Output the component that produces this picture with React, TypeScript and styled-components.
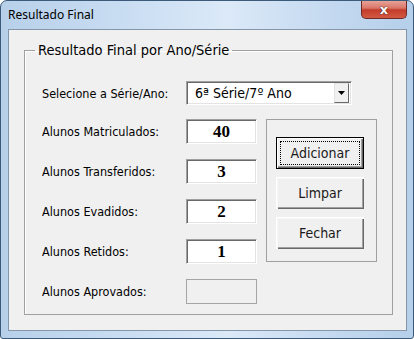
import styled, { createGlobalStyle } from "styled-components";

const GlobalStyle = createGlobalStyle`
  html, body { margin: 0; padding: 0; background: #ffffff; }
  body { font-family: "DejaVu Sans Condensed", "DejaVu Sans", sans-serif; }
`;

const Window = styled.div`
  width: 414px;
  height: 339px;
  display: flex;
  flex-direction: column;
  box-sizing: border-box;
  border: 1px solid #3c5a7a;
  border-radius: 7px 7px 3px 3px;
  background: linear-gradient(90deg, #b7d0ea 0%, #c9ddf2 30%, #dbe9f8 55%, #c4d9f0 80%, #b5cfea 100%);
  overflow: hidden;
`;

const TitleBar = styled.div`
  height: 28px;
  display: flex;
  justify-content: space-between;
  align-items: flex-start;
  padding-left: 7px;
  padding-right: 6px;
`;

const Title = styled.span`
  font-family: "Noto Sans", "Open Sans", sans-serif;
  font-size: 12px;
  color: #000;
  line-height: 28px;
`;

const CloseButton = styled.div`
  width: 46px;
  height: 19px;
  margin-top: -1px;
  box-sizing: border-box;
  border: 1px solid #6f2a24;
  border-top: none;
  border-radius: 0 0 5px 5px;
  background: linear-gradient(180deg, #e9a89c 0%, #d9776a 45%, #c43c2a 55%, #d25a45 100%);
  display: flex;
  align-items: center;
  justify-content: center;
  color: #fff;
  font-family: "DejaVu Sans", sans-serif;
  font-weight: bold;
  font-size: 13px;
  text-shadow: 0 0 1px #3a1a16, 0 0 1px #3a1a16;
`;

const Frame = styled.div`
  flex: 1;
  display: flex;
  padding: 0 6px 7px 7px;
`;

const Client = styled.div`
  flex: 1;
  display: flex;
  box-sizing: border-box;
  border: 1px solid #8596a8;
  background: #f0f0f0;
  padding: 11px 13px 15px 15px;
`;

const Group = styled.fieldset`
  flex: 1;
  margin: 0;
  padding: 0;
  border: 1px solid #a0a0a0;
  box-shadow: inset 1px 1px 0 #ffffff;
  min-width: 0;
`;

const Caption = styled.legend`
  margin-left: 10px;
  padding: 0 3px;
  font-size: 14.5px;
  line-height: 18px;
  color: #000;
`;

const Content = styled.div`
  padding-left: 17px;
`;

const ComboRow = styled.div`
  display: flex;
  align-items: center;
  margin-top: 22px;
`;

const Label = styled.span`
  width: 144px;
  flex-shrink: 0;
  font-size: 12.5px;
  color: #000;
`;

const Combo = styled.div`
  width: 166px;
  height: 24px;
  box-sizing: border-box;
  display: flex;
  align-items: center;
  background: #fff;
  border-top: 1px solid #a0a0a0;
  border-left: 1px solid #a0a0a0;
  border-right: 1px solid #ffffff;
  border-bottom: 1px solid #ffffff;
  box-shadow: inset 1px 1px 0 #696969, inset -1px -1px 0 #e3e3e3;
  padding: 1px 2px 1px 8px;
`;

const ComboText = styled.span`
  flex: 1;
  font-size: 14px;
  color: #000;
`;

const DropButton = styled.div`
  width: 15px;
  height: 20px;
  box-sizing: border-box;
  background: #f0f0f0;
  border-top: 1px solid #e3e3e3;
  border-left: 1px solid #e3e3e3;
  border-right: 1px solid #696969;
  border-bottom: 1px solid #696969;
  display: flex;
  align-items: center;
  justify-content: center;
`;

const Body = styled.div`
  display: flex;
  align-items: flex-start;
  margin-top: 14px;
`;

const Fields = styled.div`
  display: flex;
  flex-direction: column;
  gap: 15px;
`;

const FieldRow = styled.div`
  display: flex;
  align-items: center;
`;

const NumberBox = styled.div<{ $disabled?: boolean }>`
  width: 71px;
  height: 25px;
  box-sizing: border-box;
  display: flex;
  align-items: center;
  justify-content: center;
  font-family: "Liberation Serif", serif;
  font-weight: bold;
  font-size: 17px;
  color: #000;
  background: ${(p) => (p.$disabled ? "#f0f0f0" : "#ffffff")};
  border: 1px solid ${(p) => (p.$disabled ? "#a5a5a5" : "#a0a0a0")};
  border-right-color: ${(p) => (p.$disabled ? "#a5a5a5" : "#ffffff")};
  border-bottom-color: ${(p) => (p.$disabled ? "#a5a5a5" : "#ffffff")};
  box-shadow: ${(p) =>
    p.$disabled ? "none" : "inset 1px 1px 0 #696969, inset -1px -1px 0 #e3e3e3"};
`;

const ButtonFrame = styled.div`
  margin-left: 9px;
  width: 111px;
  height: 143px;
  box-sizing: border-box;
  border: 1px solid #a0a0a0;
  display: flex;
  flex-direction: column;
  gap: 8px;
  padding: 17px 0 0 9px;
`;

const Button = styled.div<{ $focused?: boolean }>`
  width: 88px;
  height: 32px;
  box-sizing: border-box;
  position: relative;
  display: flex;
  align-items: center;
  justify-content: center;
  background: #f0f0f0;
  font-size: 14px;
  color: #1a1a1a;
  border: ${(p) => (p.$focused ? "1px solid #000" : "none")};
  box-shadow: ${(p) =>
    p.$focused
      ? "inset 1px 1px 0 #ffffff, inset -1px -1px 0 #696969, inset -2px -2px 0 #a0a0a0"
      : "inset 1px 1px 0 #ffffff, inset 2px 2px 0 #f7f7f7, inset -1px -1px 0 #696969, inset -2px -2px 0 #a0a0a0"};
`;

const FocusRing = styled.span`
  position: absolute;
  inset: 3px;
  border: 1px dotted #000;
`;

const fields = [
  { label: "Alunos Matriculados:", value: "40" },
  { label: "Alunos Transferidos:", value: "3" },
  { label: "Alunos Evadidos:", value: "2" },
  { label: "Alunos Retidos:", value: "1" },
  { label: "Alunos Aprovados:", value: "", disabled: true },
];

export default function App() {
  return (
    <>
      <GlobalStyle />
      <Window>
        <TitleBar>
          <Title>Resultado Final</Title>
          <CloseButton>x</CloseButton>
        </TitleBar>
        <Frame>
          <Client>
            <Group>
              <Caption>Resultado Final por Ano/Série</Caption>
              <Content>
                <ComboRow>
                  <Label>Selecione a Série/Ano:</Label>
                  <Combo>
                    <ComboText>6ª Série/7º Ano</ComboText>
                    <DropButton>
                      <svg width="7" height="4" viewBox="0 0 7 4">
                        <path d="M0 0h7L3.5 4z" fill="#000" />
                      </svg>
                    </DropButton>
                  </Combo>
                </ComboRow>
                <Body>
                  <Fields>
                    {fields.map((f) => (
                      <FieldRow key={f.label}>
                        <Label>{f.label}</Label>
                        <NumberBox $disabled={f.disabled}>{f.value}</NumberBox>
                      </FieldRow>
                    ))}
                  </Fields>
                  <ButtonFrame>
                    <Button $focused>
                      Adicionar
                      <FocusRing />
                    </Button>
                    <Button>Limpar</Button>
                    <Button>Fechar</Button>
                  </ButtonFrame>
                </Body>
              </Content>
            </Group>
          </Client>
        </Frame>
      </Window>
    </>
  );
}
